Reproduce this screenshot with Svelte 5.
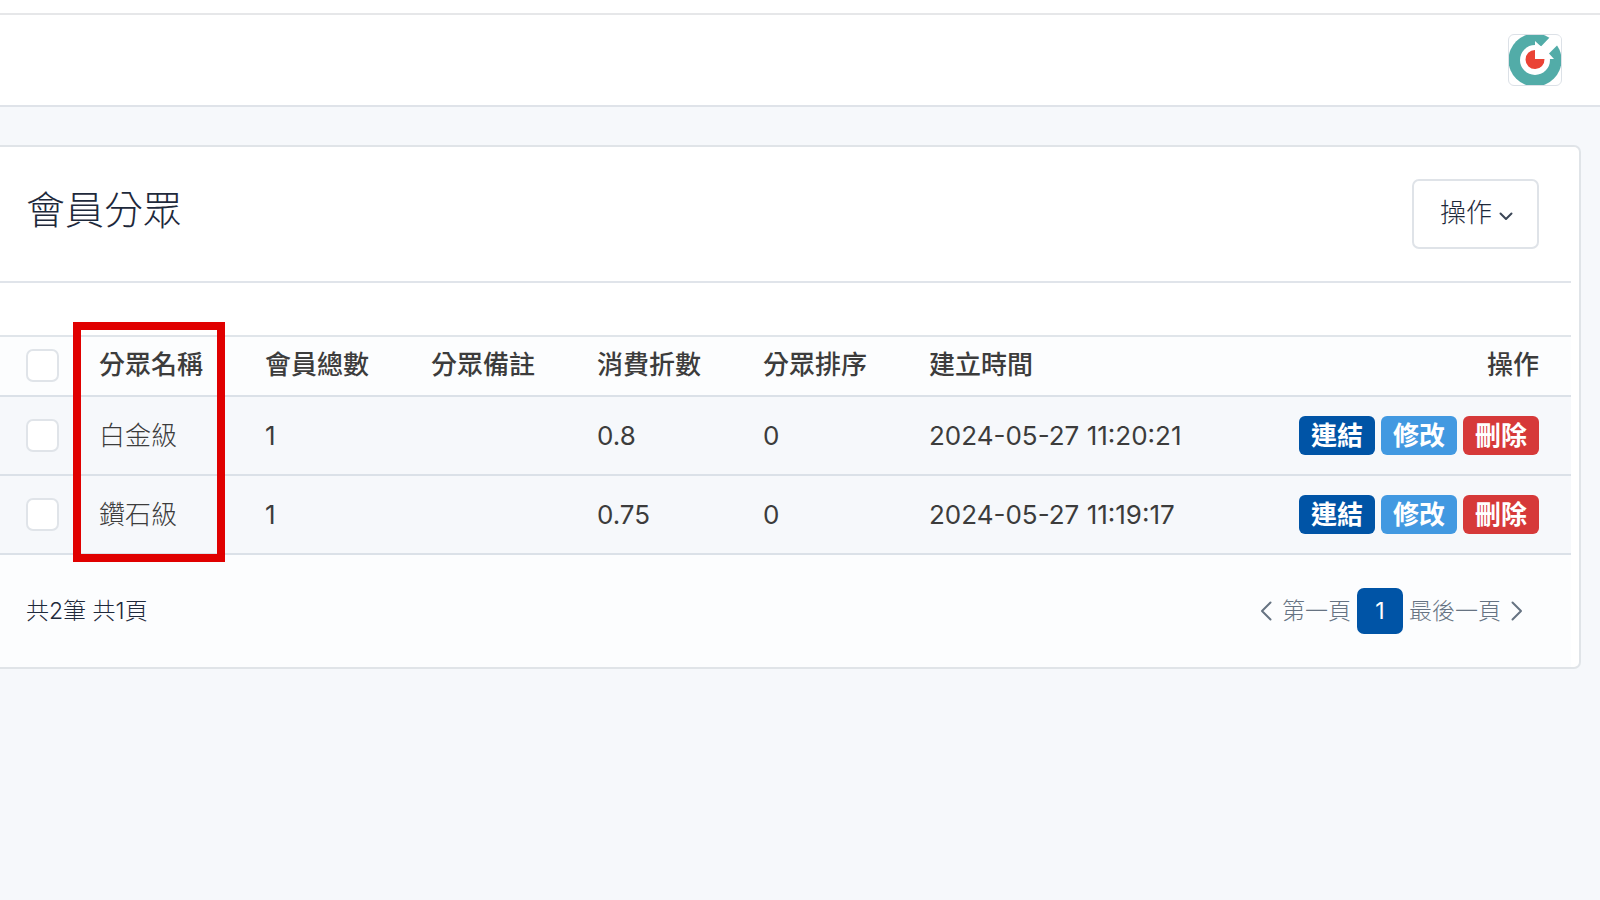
<script>
  const columns = ['分眾名稱', '會員總數', '分眾備註', '消費折數', '分眾排序', '建立時間'];

  const groups = [
    { name: '白金級', total: 1, note: '', discount: '0.8', order: 0, created: '2024-05-27 11:20:21' },
    { name: '鑽石級', total: 1, note: '', discount: '0.75', order: 0, created: '2024-05-27 11:19:17' },
  ];

  let selected = $state([false, false]);
  let allSelected = $derived(selected.every(Boolean));

  function toggleAll(event) {
    const checked = event.currentTarget.checked;
    selected = selected.map(() => checked);
  }
</script>

<div class="topline"></div>
<header class="navbar">
  <a class="avatar" href="#profile" aria-label="帳號">
    <svg viewBox="0 0 54 54" width="54" height="54">
      <circle cx="27" cy="27" r="26.500" fill="#52aca8" />
      <circle cx="27" cy="27" r="15" fill="#fff" />
      <path d="M27 26 V8 L33 13.500 L43 3 H54 V10 L49 12.500 L41 20.500 L46 26 Z" fill="#fff" />
      <path d="M27 17 V26 H36.500 A9.500 9.500 0 1 1 27 17 Z" fill="#ea4335" />
    </svg>
  </a>
</header>

<main>
  <section class="card">
    <div class="card-header">
      <h1>會員分眾</h1>
      <button type="button" class="dropdown">
        操作
        <svg viewBox="0 0 14 9" width="14" height="9"><path d="M1.500 1.500 L7 7 L12.500 1.500" /></svg>
      </button>
    </div>

    <div class="table-wrap">
      <table>
        <thead>
          <tr>
            <th class="check">
              <input type="checkbox" aria-label="全選" checked={allSelected} onchange={toggleAll} />
            </th>
            {#each columns as column}
              <th>{column}</th>
            {/each}
            <th class="actions">操作</th>
          </tr>
        </thead>
        <tbody>
          {#each groups as group, i}
            <tr>
              <td class="check">
                <input type="checkbox" aria-label={group.name} bind:checked={selected[i]} />
              </td>
              <td class="name">{group.name}</td>
              <td>{group.total}</td>
              <td>{group.note}</td>
              <td>{group.discount}</td>
              <td>{group.order}</td>
              <td>{group.created}</td>
              <td class="actions">
                <div class="buttons">
                  <button type="button" class="badge link">連結</button>
                  <button type="button" class="badge edit">修改</button>
                  <button type="button" class="badge delete">刪除</button>
                </div>
              </td>
            </tr>
          {/each}
        </tbody>
      </table>
      <div class="highlight"></div>
    </div>

    <div class="card-footer">
      <p>共2筆 共1頁</p>
      <nav class="pagination" aria-label="分頁">
        <a href="#first">
          <svg viewBox="0 0 12 20" width="12" height="20"><path d="M10.500 1.500 L2 10 L10.500 18.500" /></svg>
          第一頁
        </a>
        <a href="#page-1" class="current">1</a>
        <a href="#last">
          最後一頁
          <svg viewBox="0 0 12 20" width="12" height="20"><path d="M1.500 1.500 L10 10 L1.500 18.500" /></svg>
        </a>
      </nav>
    </div>
  </section>
</main>

<style>
  :global(body) {
    background: #f6f8fb;
    color: #1e293b;
    font-family: Inter, 'Noto Sans CJK TC', sans-serif;
    font-size: 26px;
    line-height: 38px;
  }

  .topline {
    height: 13px;
    background: #fff;
    border-bottom: 2px solid #e6e7e9;
  }

  .navbar {
    display: flex;
    justify-content: flex-end;
    align-items: center;
    height: 90px;
    padding-right: 38px;
    background: #fff;
    border-bottom: 2px solid #dfe3e9;
  }

  .avatar {
    display: flex;
    width: 52px;
    height: 50px;
    justify-content: center;
    align-items: center;
    overflow: hidden;
    border: 1px solid #dce1e7;
    border-radius: 6px;
  }

  .avatar svg {
    flex: none;
  }

  main {
    padding: 38px 19px 38px 0;
  }

  .card {
    background: #fff;
    border: 2px solid #e0e4e8;
    border-left: 0;
    border-radius: 0 7px 7px 0;
    padding-right: 8px;
  }

  .card-header {
    display: flex;
    justify-content: space-between;
    align-items: flex-start;
    padding: 32px 32px 32px 26px;
    border-bottom: 2px solid #e0e4ea;
  }

  h1 {
    margin: 0;
    font-size: 39px;
    font-weight: 300;
    line-height: 62px;
  }

  button {
    font: inherit;
    cursor: pointer;
  }

  .dropdown {
    display: flex;
    align-items: center;
    gap: 7px;
    height: 70px;
    padding: 0 24px 2px 26px;
    color: #1e293b;
    font-weight: 300;
    background: #fff;
    border: 2px solid #dfe3e8;
    border-radius: 7px;
  }

  svg path {
    stroke-linecap: round;
    stroke-linejoin: round;
  }

  .dropdown svg {
    fill: none;
    stroke: #3b4656;
    stroke-width: 2;
    margin-top: 6px;
  }

  .table-wrap {
    position: relative;
    margin-top: 52px;
  }

  table {
    width: 100%;
    table-layout: fixed;
    border-collapse: separate;
    border-spacing: 0;
    border-top: 2px solid #e0e5ea;
    color: #3c3c3c;
  }

  th,
  td {
    padding: 0 13px;
    text-align: left;
    white-space: nowrap;
    border-bottom: 2px solid #dbe1e8;
  }

  th {
    width: 166px;
    height: 60px;
    padding-bottom: 2px;
    box-sizing: border-box;
    font-weight: 500;
    background: #fcfdfe;
  }

  th:nth-last-child(2) {
    width: 300px;
  }

  th:last-child {
    width: auto;
  }

  td {
    height: 77px;
    background: #f6f8fb;
  }

  .name {
    font-weight: 300;
  }

  .check {
    padding-left: 26px;
  }

  th.check {
    width: 86px;
  }

  .actions {
    padding-right: 32px;
    text-align: right;
  }

  input {
    appearance: none;
    display: block;
    width: 33px;
    height: 33px;
    margin: 0;
    background: #fff;
    border: 2px solid #e0e4e9;
    border-radius: 7px;
  }

  input:checked {
    background: #0054a6;
  }

  .buttons {
    display: flex;
    justify-content: flex-end;
    gap: 6px;
  }

  .badge {
    height: 39px;
    padding: 0 12px;
    color: #fff;
    font-weight: 700;
    line-height: 37px;
    border: 0;
    border-radius: 6px;
  }

  .link {
    background: #0054a6;
  }

  .edit {
    background: #4299e1;
  }

  .delete {
    background: #d63939;
  }

  .highlight {
    position: absolute;
    top: -13px;
    bottom: -7px;
    left: 73px;
    width: 152px;
    box-sizing: border-box;
    border: 8px solid #e00000;
    pointer-events: none;
  }

  .card-footer {
    display: flex;
    justify-content: space-between;
    align-items: center;
    padding: 33px 48px 33px 26px;
    font-size: 23px;
    font-weight: 300;
    background: #fcfdfe;
  }

  .card-footer p {
    margin: 0;
  }

  .pagination {
    display: flex;
    align-items: center;
    gap: 6px;
  }

  .pagination a {
    display: flex;
    align-items: center;
    gap: 10px;
    color: #667382;
    text-decoration: none;
  }

  .pagination svg {
    fill: none;
    stroke: #667382;
    stroke-width: 2;
  }

  .pagination .current {
    justify-content: center;
    width: 46px;
    height: 46px;
    color: #fff;
    font-weight: 400;
    background: #0054a6;
    border-radius: 7px;
  }
</style>
